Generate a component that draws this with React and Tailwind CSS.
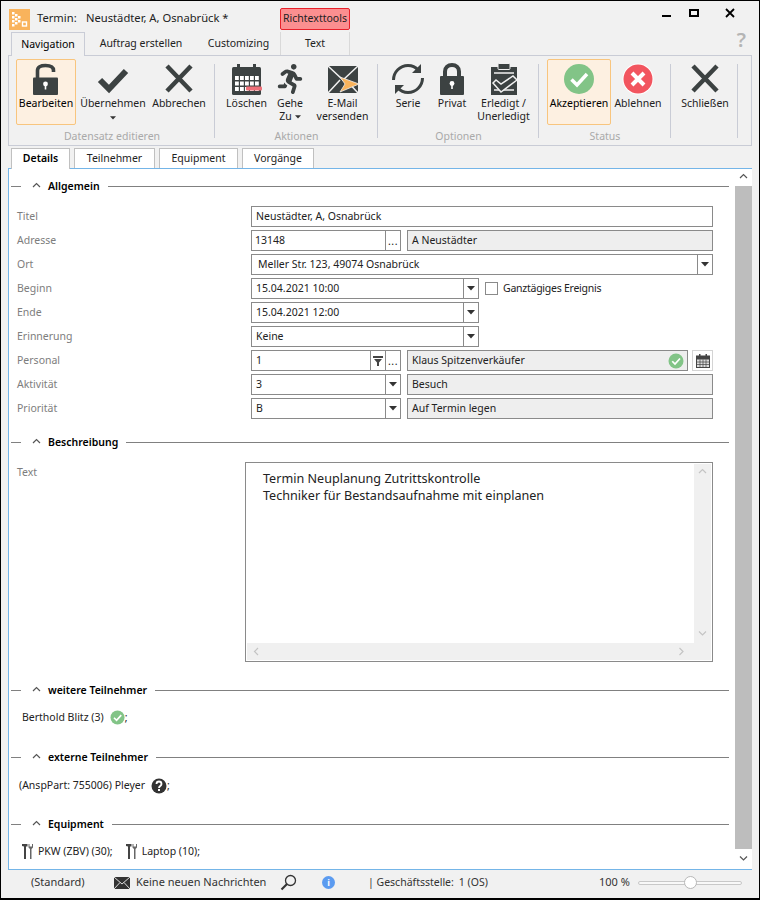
import React from 'react';
import { FaRunning } from 'react-icons/fa';

const DARK = '#3c4242';

const LogoIcon = () => (
  <svg width="21" height="21" viewBox="0 0 21 21" className="shrink-0">
    <rect width="21" height="21" fill="#f9b35c" />
    <g fill="#fff">
      <rect x="3" y="3" width="2.5" height="2.5" />
      <rect x="3" y="7" width="2.5" height="2.5" />
      <rect x="3" y="11" width="2.5" height="2.5" />
      <rect x="3" y="15" width="2.5" height="2.5" />
      <rect x="6" y="5" width="2.5" height="2.5" />
      <rect x="6" y="9" width="2.5" height="2.5" />
      <rect x="6" y="13" width="2.5" height="2.5" />
      <rect x="9" y="7" width="2.5" height="2.5" />
      <rect x="9" y="11" width="2.5" height="2.5" />
    </g>
    <rect x="13.5" y="13" width="4" height="4" fill="none" stroke="#fff" strokeWidth="1.4" />
  </svg>
);

const LockIcon = ({ open }) => (
  <svg width="32" height="34" viewBox="0 0 32 34">
    {open ? (
      <>
        <path d="M7.500 16V8.500C7.500 5 10.500 3.500 15.500 3.500s8 1.500 8 5V10" fill="none" stroke={DARK} strokeWidth="3.600" />
        <rect x="3" y="15.500" width="25" height="17.500" rx="1" fill={DARK} />
        <circle cx="15.500" cy="22" r="2.400" fill="#fff" />
        <rect x="14.700" y="22.500" width="1.600" height="5" fill="#fff" />
      </>
    ) : (
      <>
        <path d="M9 15V9.500C9 5.500 12 3 16 3s7 2.500 7 6.500V15" fill="none" stroke={DARK} strokeWidth="4" />
        <rect x="4" y="14" width="24" height="19" rx="1" fill={DARK} />
        <circle cx="16" cy="21.500" r="2.400" fill="#fff" />
        <rect x="15.200" y="22" width="1.600" height="5" fill="#fff" />
      </>
    )}
  </svg>
);

const CheckIcon = () => (
  <svg width="34" height="34" viewBox="0 0 34 34">
    <path d="M4 18l9 9L30 9" fill="none" stroke={DARK} strokeWidth="6" />
  </svg>
);

const CrossIcon = () => (
  <svg width="34" height="34" viewBox="0 0 34 34">
    <path d="M5 4l24 25M29 4L5 29" fill="none" stroke={DARK} strokeWidth="4.500" />
  </svg>
);

const CalendarIcon = () => (
  <svg width="34" height="34" viewBox="0 0 34 34">
    <rect x="2" y="5" width="29" height="28" rx="1.500" fill={DARK} />
    <rect x="7" y="2" width="3" height="6" fill={DARK} />
    <rect x="23" y="2" width="3" height="6" fill={DARK} />
    <g fill="#fff">
      {[0, 1, 2, 3, 4].map(c =>
        [0, 1, 2].map(r => (
          <rect key={`${c}-${r}`} x={5 + c * 5} y={14 + r * 5.500} width="3.800" height="4" />
        )),
      )}
    </g>
    <rect x="16" y="24.500" width="16" height="4" rx="1" fill="#ee7079" />
  </svg>
);

const MailFlagIcon = () => (
  <svg width="34" height="34" viewBox="0 0 34 34">
    <rect x="2" y="4" width="30" height="27" fill={DARK} />
    <path d="M2 4l15 14L32 4M2 31l12-13M32 31L20 18" fill="none" stroke="#f1f1f1" strokeWidth="1.500" />
    <path d="M14 15l19 7-19 8 5-8z" fill="#f9b35c" stroke="#f1f1f1" strokeWidth="0.800" />
  </svg>
);

const SyncIcon = () => (
  <svg width="34" height="34" viewBox="0 0 34 34" fill="none" stroke={DARK} strokeWidth="3">
    <path d="M2.500 18C2.500 10 9 3.500 17 3.500c4 0 7.500 1.500 10 4.500" />
    <path d="M31.500 16c0 8-6.500 14.500-14.500 14.500-4 0-7.500-1.500-10-4.500" />
    <path d="M30 2v9h-9z" fill={DARK} stroke="none" />
    <path d="M4 32v-9h9z" fill={DARK} stroke="none" />
  </svg>
);

const ClipboardIcon = () => (
  <svg width="34" height="34" viewBox="0 0 34 34">
    <rect x="4" y="5" width="26" height="28" fill={DARK} />
    <rect x="11" y="1.500" width="12" height="6" rx="1" fill={DARK} stroke="#f1f1f1" strokeWidth="1" />
    <path d="M7 11h20M7 28h20" stroke="#f1f1f1" strokeWidth="1.500" />
    <path d="M6 21l3-3 5 4 12-8 4 4-16 12z" fill={DARK} stroke="#f1f1f1" strokeWidth="1.500" />
  </svg>
);

const StatusOk = ({ size = 32 }) => (
  <svg width={size} height={size} viewBox="0 0 32 32" className="shrink-0">
    <circle cx="16" cy="16" r="15" fill="#82c487" />
    <path d="M8.500 16.500l5.500 5.500L24 11" fill="none" stroke="#fff" strokeWidth="3.500" />
  </svg>
);

const StatusNo = () => (
  <svg width="32" height="32" viewBox="0 0 32 32">
    <circle cx="16" cy="16" r="15.500" fill="#fff" />
    <circle cx="16" cy="16" r="14.500" fill="#f2555f" />
    <path d="M10 10l12 12M22 10L10 22" fill="none" stroke="#fff" strokeWidth="4" />
  </svg>
);

const Caret = ({ small }) => (
  <svg width={small ? 6 : 8} height={small ? 4 : 5} viewBox="0 0 8 5" className="shrink-0">
    <path d="M0 0h8L4 4.500z" fill="#333" />
  </svg>
);

const Chevron = ({ dir = 'up', color = '#555' }) => {
  const d = {
    up: 'M1 5l3.500-3.500L8 5',
    down: 'M1 1.500L4.500 5 8 1.500',
    left: 'M5 1L1.500 4.500 5 8',
    right: 'M1.500 1L5 4.500 1.500 8',
  }[dir];
  return (
    <svg width="9" height="9" viewBox="0 0 9 9" className="shrink-0">
      <path d={d} fill="none" stroke={color} strokeWidth="1.200" />
    </svg>
  );
};

const ToolIcon = () => (
  <svg width="11" height="17" viewBox="0 0 11 17" className="shrink-0">
    <path d="M0 1h5.500v2.500H4V16H2V3.500L0 3z" fill="#444" />
    <path d="M6.500 1v3.500L8 6v10h1.500V6L11 4.500V1h-1v2.500H7.500V1z" fill="#666" />
  </svg>
);

const RibbonButton = ({ width, ml = 0, active, icon, children }) => (
  <div
    style={{ width, marginLeft: ml }}
    className={`flex flex-col items-center h-[66px] rounded-[2px] text-center leading-[13px] ${
      active ? 'border border-[#f8c57e] bg-[#fdf0e1]' : 'border border-transparent'
    }`}
  >
    <div className="h-[37px] flex items-center justify-center">{icon}</div>
    {children}
  </div>
);

const RibbonGroup = ({ width, pl, title, children }) => (
  <div style={{ width, paddingLeft: pl }} className="relative flex flex-col pt-[3px]">
    <div className="flex h-[66px]">{children}</div>
    <div className="absolute left-0 right-0 top-[74px] text-center text-[#a9a9a9] leading-[13px]">{title}</div>
    <div className="absolute right-0 top-[8px] h-[74px] w-px bg-[#c9ccd6]" />
  </div>
);

const Section = ({ title, mt }) => (
  <div style={{ marginTop: mt }} className="flex items-center h-[20px] pl-[2px] pr-[5px]">
    <div className="w-[10px] h-px bg-[#808080]" />
    <div className="ml-[11px] w-[15px]">
      <Chevron />
    </div>
    <div className="font-semibold text-black ml-px pt-px">{title}</div>
    <div className="flex-1 h-px bg-[#808080] ml-[8px]" />
  </div>
);

const Field = ({ width, grow, gray, pl = 4, children }) => (
  <div
    style={{ width, paddingLeft: pl }}
    className={`h-[21px] border border-[#8a8a8a] flex items-center min-w-0 whitespace-nowrap text-[#222] ${
      grow ? 'flex-1' : 'shrink-0'
    } ${gray ? 'bg-[#eeeeee]' : 'bg-white'}`}
  >
    {children}
  </div>
);

const DropBtn = () => (
  <div className="ml-auto h-full w-[15px] shrink-0 border-l border-[#8a8a8a] flex items-center justify-center">
    <Caret />
  </div>
);

const DotsBtn = () => (
  <div className="ml-auto h-full w-[15px] shrink-0 border-l border-[#8a8a8a] flex items-end justify-center pb-[4px] leading-none tracking-[0.5px]">
    ...
  </div>
);

const FormRow = ({ label, children }) => (
  <div className="flex items-center h-[21px]">
    <div className="w-[242px] pl-[8px] text-[#7d7d7d] shrink-0">{label}</div>
    <div className="flex-1 flex items-center">{children}</div>
  </div>
);

function App() {
  return (
    <div className="w-[760px] h-[900px] overflow-hidden bg-[#f1f1f1] border border-b-2 border-black flex flex-col text-[10.5px] text-[#222] font-['Noto_Sans',sans-serif]">
      {/* title bar */}
      <div className="h-[31px] shrink-0 flex items-start pl-[8px] pt-[8px]">
        <LogoIcon />
        <div className="ml-[7px] mt-[1px] text-[11.2px] w-[49px]">Termin:</div>
        <div className="mt-[1px] text-[11.2px] w-[194px]">Neustädter, A, Osnabrück *</div>
        <div className="w-[70px] h-[22px] -mt-[1px] border border-[#e8202a] bg-[#fb8f90] rounded-[2px] flex items-center justify-center">
          Richtexttools
        </div>
        <div className="ml-auto flex items-center h-[8px] pr-[24px]">
          <div className="w-[9px] h-[2px] bg-black mt-[5px]" />
          <div className="w-[10px] h-[8px] border-2 border-black ml-[18px]" />
          <svg width="10" height="10" viewBox="0 0 10 10" className="ml-[26px]">
            <path d="M1 1l8 8M9 1L1 9" stroke="#000" strokeWidth="1.800" />
          </svg>
        </div>
      </div>

      {/* ribbon tabs */}
      <div className="h-[23px] shrink-0 flex items-end pl-[10px] relative">
        <div className="w-[74px] h-[24px] -mb-px z-10 bg-[#f1f1f1] border border-b-0 border-[#c9ccd6] flex items-center justify-center text-black">
          Navigation
        </div>
        <div className="w-[112px] h-[23px] flex items-center justify-center">Auftrag erstellen</div>
        <div className="w-[83px] h-[23px] flex items-center justify-center">Customizing</div>
        <div className="w-[70px] h-[23px] border-x border-[#d9d9d9] flex items-center justify-center">Text</div>
        <div className="absolute right-[13px] top-[-3px] text-[20px] leading-[22px] font-semibold text-[#b5b5b5]">?</div>
      </div>

      {/* ribbon */}
      <div className="h-[91px] mx-[7px] shrink-0 border border-[#c9ccd6] flex bg-[#f1f1f1]">
        <RibbonGroup width={206} pl={7} title="Datensatz editieren">
          <RibbonButton width={60} active icon={<LockIcon open />}>
            <span className="text-black">Bearbeiten</span>
          </RibbonButton>
          <RibbonButton width={66} ml={4} icon={<CheckIcon />}>
            <span>Übernehmen</span>
            <span className="mt-[6px]"><Caret small /></span>
          </RibbonButton>
          <RibbonButton width={58} ml={4} icon={<CrossIcon />}>
            <span>Abbrechen</span>
          </RibbonButton>
        </RibbonGroup>
        <RibbonGroup width={163} pl={10} title="Aktionen">
          <RibbonButton width={43} icon={<CalendarIcon />}>
            <span>Löschen</span>
          </RibbonButton>
          <RibbonButton width={32} ml={6} icon={<FaRunning size={30} color={DARK} />}>
            <span>Gehe</span>
            <span className="flex items-center gap-[3px]">
              Zu <Caret small />
            </span>
          </RibbonButton>
          <RibbonButton width={55} ml={9} icon={<MailFlagIcon />}>
            <span>E-Mail</span>
            <span>versenden</span>
          </RibbonButton>
        </RibbonGroup>
        <RibbonGroup width={161} pl={14} title="Optionen">
          <RibbonButton width={32} icon={<SyncIcon />}>
            <span>Serie</span>
          </RibbonButton>
          <RibbonButton width={32} ml={12} icon={<LockIcon />}>
            <span>Privat</span>
          </RibbonButton>
          <RibbonButton width={53} ml={9} icon={<ClipboardIcon />}>
            <span>Erledigt /</span>
            <span>Unerledigt</span>
          </RibbonButton>
        </RibbonGroup>
        <RibbonGroup width={132} pl={8} title="Status">
          <RibbonButton width={64} active icon={<StatusOk />}>
            <span className="text-black">Akzeptieren</span>
          </RibbonButton>
          <RibbonButton width={50} ml={2} icon={<StatusNo />}>
            <span>Ablehnen</span>
          </RibbonButton>
        </RibbonGroup>
        <RibbonGroup width={67} pl={9} title="">
          <RibbonButton width={50} icon={<CrossIcon />}>
            <span>Schließen</span>
          </RibbonButton>
        </RibbonGroup>
      </div>

      {/* page tabs */}
      <div className="h-[22px] shrink-0 flex items-end pl-[10px] gap-[4px]">
        <div className="w-[59px] h-[21px] -mb-px z-10 bg-white border border-b-0 border-[#c0c0c0] flex items-center justify-center font-semibold text-black">
          Details
        </div>
        <div className="w-[81px] h-[20px] bg-white border border-b-0 border-[#c0c0c0] flex items-center justify-center">Teilnehmer</div>
        <div className="w-[79px] h-[20px] bg-white border border-b-0 border-[#c0c0c0] flex items-center justify-center">Equipment</div>
        <div className="w-[72px] h-[20px] bg-white border border-b-0 border-[#c0c0c0] flex items-center justify-center">Vorgänge</div>
      </div>

      {/* main panel */}
      <div className="h-[702px] mx-[7px] shrink-0 border border-[#74b5e8] bg-white flex">
        <div className="w-[725px] shrink-0">
          <Section title="Allgemein" mt={7} />
          <div className="mt-[10px] flex flex-col gap-[3px] pr-[21px]">
            <FormRow label="Titel">
              <Field grow>Neustädter, A, Osnabrück</Field>
            </FormRow>
            <FormRow label="Adresse">
              <Field width={150} pl={3}>13148<DotsBtn /></Field>
              <div className="w-[6px]" />
              <Field grow gray>A Neustädter</Field>
            </FormRow>
            <FormRow label="Ort">
              <Field grow pl={6}>Meller Str. 123, 49074 Osnabrück<DropBtn /></Field>
            </FormRow>
            <FormRow label="Beginn">
              <Field width={228}>15.04.2021 10:00<DropBtn /></Field>
              <div className="w-[13px] h-[13px] border border-[#8a8a8a] bg-white ml-[6px] mr-[5px]" />
              <span className="tracking-[-0.25px]">Ganztägiges Ereignis</span>
            </FormRow>
            <FormRow label="Ende">
              <Field width={228}>15.04.2021 12:00<DropBtn /></Field>
            </FormRow>
            <FormRow label="Erinnerung">
              <Field width={228}>Keine<DropBtn /></Field>
            </FormRow>
            <FormRow label="Personal">
              <Field width={150}>
                1
                <div className="ml-auto h-full w-[15px] shrink-0 border-l border-[#8a8a8a] flex items-center justify-center">
                  <svg width="10" height="10" viewBox="0 0 10 10">
                    <path d="M0 0h10v2H0zM1 3h8L6 6.500V10H4V6.500z" fill="#444" />
                  </svg>
                </div>
                <div className="h-full w-[15px] shrink-0 border-l border-[#8a8a8a] flex items-end justify-center pb-[4px] leading-none tracking-[0.5px]">...</div>
              </Field>
              <div className="w-[6px]" />
              <Field grow gray>
                Klaus Spitzenverkäufer
                <span className="ml-auto mr-[3px]"><StatusOk size={16} /></span>
              </Field>
              <div className="w-[21px] h-[21px] ml-[4px] shrink-0 border border-[#d4d4d4] flex items-center justify-center">
                <svg width="14" height="14" viewBox="0 0 14 14">
                  <rect x="0" y="1.500" width="14" height="12.500" fill="#444" />
                  <rect x="3" y="0" width="1.500" height="3" fill="#444" />
                  <rect x="9.500" y="0" width="1.500" height="3" fill="#444" />
                  <path d="M1 5.500h12v7.500H1z" fill="#ddd" />
                  <path d="M1 8h12M1 10.500h12M4 5.500v8M7 5.500v8M10 5.500v8" stroke="#444" strokeWidth="0.700" />
                </svg>
              </div>
            </FormRow>
            <FormRow label="Aktivität">
              <Field width={150}>3<DropBtn /></Field>
              <div className="w-[6px]" />
              <Field grow gray>Besuch</Field>
            </FormRow>
            <FormRow label="Priorität">
              <Field width={150}>B<DropBtn /></Field>
              <div className="w-[6px]" />
              <Field grow gray>Auf Termin legen</Field>
            </FormRow>
          </div>

          <Section title="Beschreibung" mt={13} />
          <div className="mt-[10px] flex pr-[21px]">
            <div className="w-[236px] pl-[8px] pt-[3px] text-[#7d7d7d] shrink-0">Text</div>
            <div className="flex-1 h-[200px] border border-[#8a8a8a] p-[1px] flex flex-col">
              <div className="flex-1 flex min-h-0">
                <div className="flex-1 pl-[16px] pt-[6px] text-[12.6px] leading-[17px] text-[#222]">
                  <div>Termin Neuplanung Zutrittskontrolle</div>
                  <div>Techniker für Bestandsaufnahme mit einplanen</div>
                </div>
                <div className="w-[17px] bg-[#f0f0f0] flex flex-col items-center justify-between py-[4px]">
                  <Chevron color="#c4c4c4" />
                  <Chevron dir="down" color="#c4c4c4" />
                </div>
              </div>
              <div className="h-[17px] bg-[#f0f0f0] flex items-center justify-between pl-[6px] pr-[24px]">
                <Chevron dir="left" color="#c4c4c4" />
                <Chevron dir="right" color="#c4c4c4" />
              </div>
            </div>
          </div>

          <Section title="weitere Teilnehmer" mt={18} />
          <div className="mt-[7px] h-[20px] flex items-center pl-[13px] pt-px">
            Berthold Blitz (3)
            <span className="ml-[6px]"><StatusOk size={15} /></span>;
          </div>

          <Section title="externe Teilnehmer" mt={20} />
          <div className="mt-[8px] h-[20px] flex items-center pl-[10px] pt-px">
            (AnspPart: 755006) Pleyer
            <svg width="16" height="16" viewBox="0 0 16 16" className="ml-[6px]">
              <circle cx="8" cy="8" r="7.500" fill="#333" />
              <path d="M5.500 6c0-1.500 1-2.500 2.500-2.500S10.500 4.500 10.500 6c0 2-2.500 2-2.500 4" fill="none" stroke="#fff" strokeWidth="1.800" />
              <rect x="7" y="11" width="2" height="2" fill="#fff" />
            </svg>
            ;
          </div>

          <Section title="Equipment" mt={19} />
          <div className="mt-[7px] h-[20px] flex items-center pl-[13px] pt-px">
            <ToolIcon />
            <span className="ml-[5px]">PKW (ZBV) (30);</span>
            <span className="ml-[13px]"><ToolIcon /></span>
            <span className="ml-[5px]">Laptop (10);</span>
          </div>
        </div>

        {/* scrollbar */}
        <div className="w-[17px] ml-px shrink-0 flex flex-col bg-white">
          <div className="h-[17px] flex items-center justify-center"><Chevron /></div>
          <div className="flex-1 bg-[#bdbdbd]" />
          <div className="h-[20px] flex items-center justify-center"><Chevron dir="down" /></div>
        </div>
      </div>

      {/* status bar */}
      <div className="flex-1 flex items-center text-[#333] pb-[3px] text-[11px]">
        <span className="ml-[30px] w-[83px]">(Standard)</span>
        <svg width="16" height="12" viewBox="0 0 16 12">
          <rect width="16" height="12" fill="#333" />
          <path d="M0 0l8 7 8-7M0 12l6-6.500M16 12l-6-6.500" fill="none" stroke="#f1f1f1" strokeWidth="0.900" />
        </svg>
        <span className="ml-[6px] w-[144px]">Keine neuen Nachrichten</span>
        <svg width="17" height="17" viewBox="0 0 17 17">
          <circle cx="10.500" cy="6.500" r="5" fill="none" stroke="#333" strokeWidth="1.300" />
          <path d="M7 10l-5.500 5.500" stroke="#333" strokeWidth="2.200" />
        </svg>
        <span className="ml-[25px] w-[13px] h-[13px] rounded-full bg-[#5b9bf0] text-white text-[9px] leading-[13px] text-center font-bold">i</span>
        <span className="ml-[33px] w-[231px] text-[10.5px]">| Geschäftsstelle:<span className="ml-[5px]">1 (OS)</span></span>
        <span className="w-[39px]">100 %</span>
        <div className="relative w-[104px] h-[4px] border border-[#c8c8c8] rounded-full bg-[#f8f8f8]">
          <div className="absolute left-[45px] top-[-6px] w-[13px] h-[13px] rounded-full border border-[#b8b8b8] bg-white" />
        </div>
      </div>
    </div>
  );
}

export default App;
